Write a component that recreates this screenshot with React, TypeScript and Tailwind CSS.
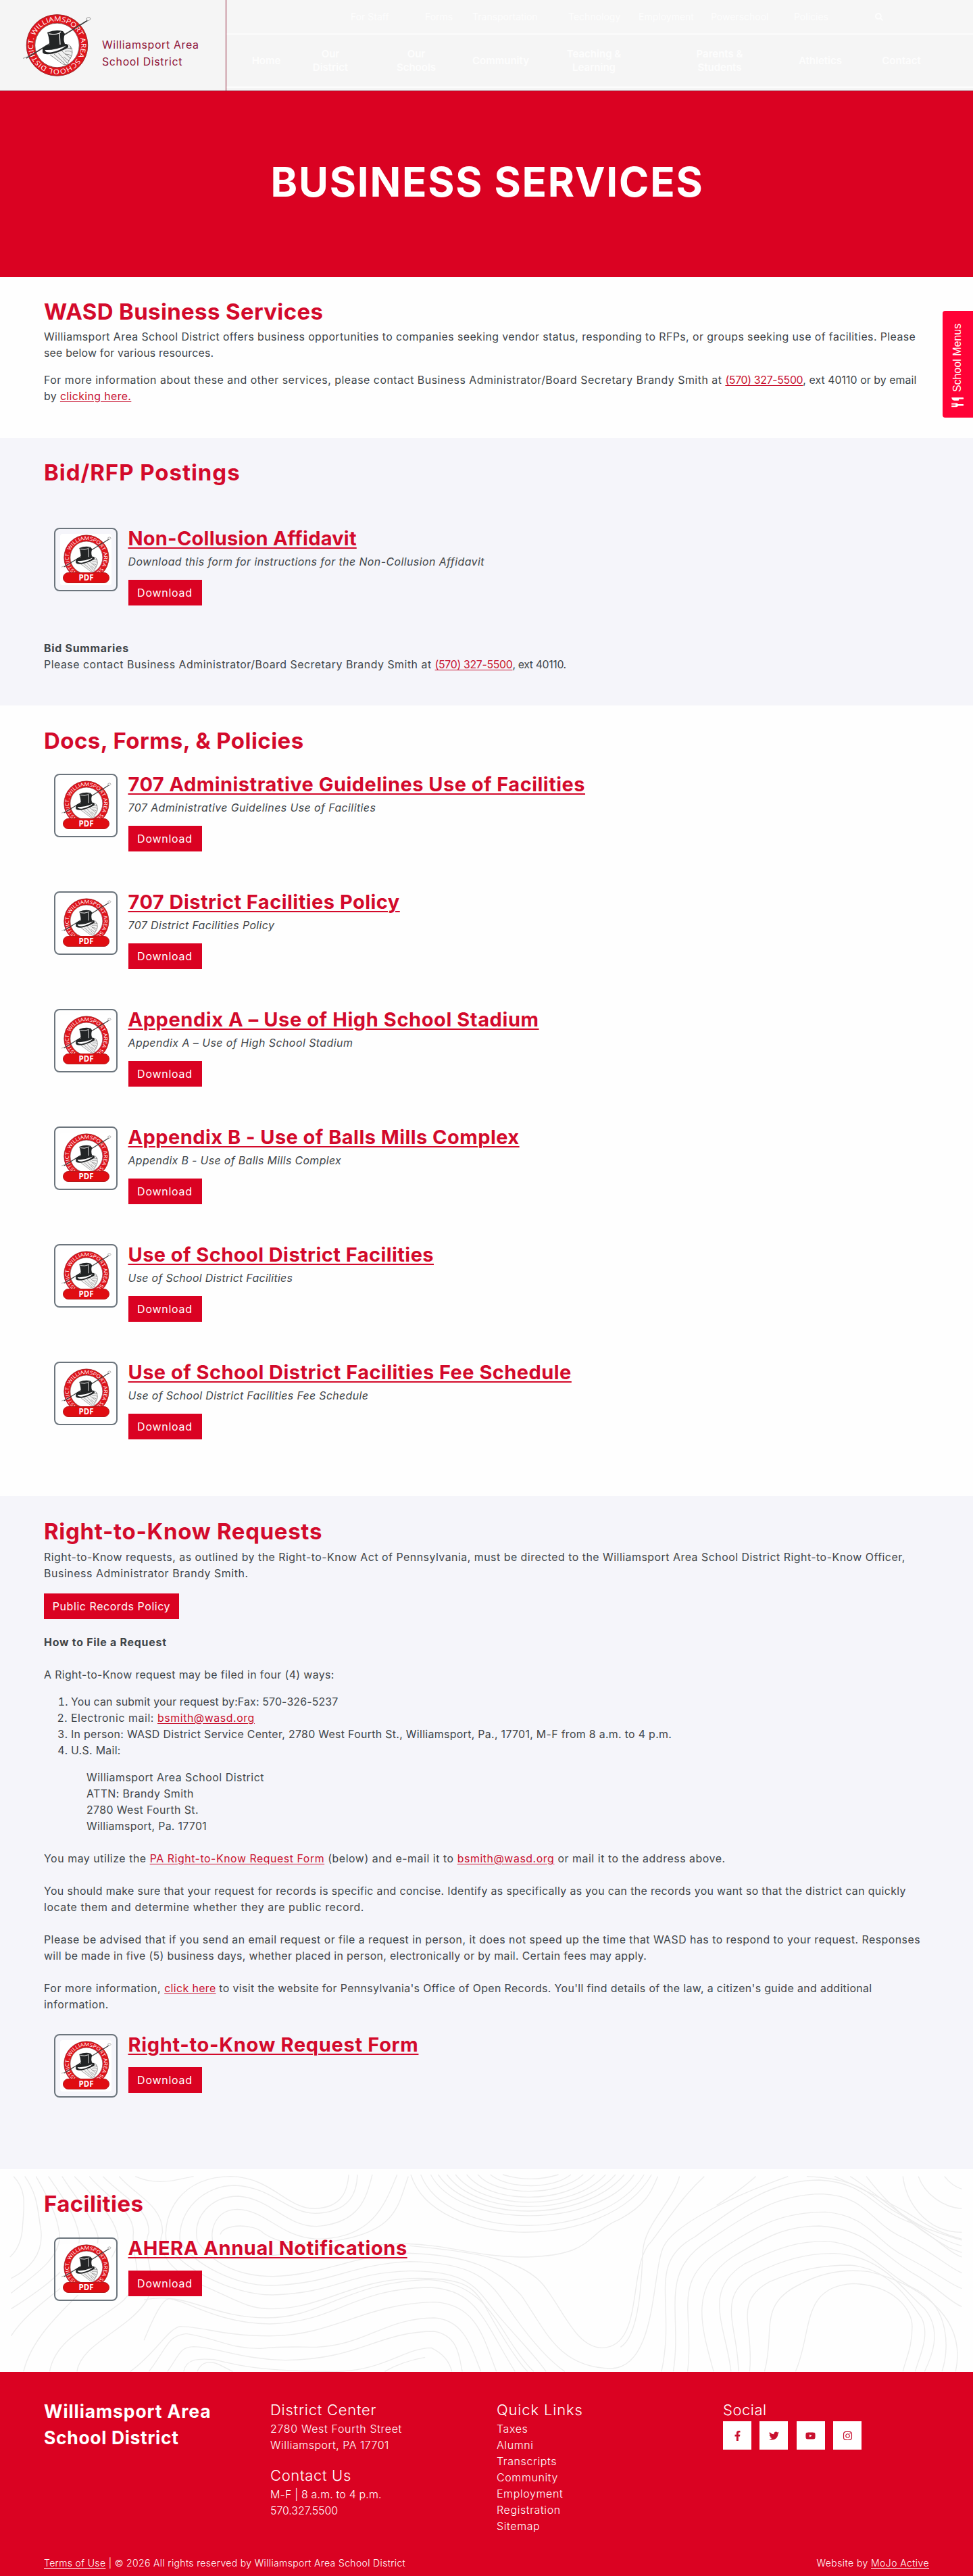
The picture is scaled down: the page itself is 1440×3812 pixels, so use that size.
import type { ReactNode } from 'react';
import { useId } from 'react';
import { FaFacebookF, FaInstagram, FaSearch, FaTwitter, FaYoutube } from 'react-icons/fa';

/* Circular district seal: lettered ring, top hat, cane and gloves. */
function Seal({ className }: { className: string }) {
  const id = useId();
  return (
    <svg viewBox="14 8 104 98" className={className}>
      <circle cx="64.5" cy="57" r="38" fill="#fff" />
      <circle cx="64.5" cy="57" r="39.2" fill="none" stroke="#e0141c" strokeWidth="12.4" />
      <circle cx="64.5" cy="57" r="45.3" fill="none" stroke="#8d2a2c" strokeWidth="0.9" />
      <circle cx="64.5" cy="57" r="32.8" fill="none" stroke="#6b2426" strokeWidth="0.8" />
      <defs>
        <path id={id} d="M28.9 57 A35.6 35.6 0 1 1 100.1 57 A35.6 35.6 0 1 1 28.900 57" transform="rotate(23 64.5 57)" />
      </defs>
      <text fill="#fff" fontSize="10" fontFamily="'Open Sans', 'Noto Sans', sans-serif" fontWeight="400">
        <textPath href={`#${id}`} textLength="220" lengthAdjust="spacingAndGlyphs">
          WILLIAMSPORT AREA SCHOOL DISTRICT.
        </textPath>
      </text>
      <path d="M50 70 L72 63 L84 58 L88 70 L80 85 L74 84 L64 78 Z" fill="#f1f1f1" />
      <path d="M54 71 L73 85 L79 86 M60 70 L76 84 M66 68 L80 84 L84 76 L72 66 M70 64 Q80 60 87 62 M84 58 Q90 66 84 77 M76 66 Q84 64 87 68 M76 70 Q83 70 86 73 M74 74 L82 80 M80 56 Q86 57 84 63" fill="none" stroke="#7f7f7f" strokeWidth="0.9" />
      <path d="M19 76 L110 20" stroke="#3a3a3a" strokeWidth="1.6" />
      <path d="M14 76.5 L22 73.5" stroke="#aaa" strokeWidth="1.2" />
      <path d="M108 17 Q113 14 114 18 Q112 22 108.500 20 Z" fill="#f7f7f7" stroke="#8a8a8a" strokeWidth="0.9" />
      <path d="M43 62 Q47 56 53 57 L76 55 Q82 55 81 60 Q72 66 58 69.500 Q44 72 43 67 Z" fill="#232526" />
      <path d="M46.500 64 Q60 65 78 57.500 Q70 65 55 67.500 Q47 68 46.500 64 Z" fill="#fff" />
      <path d="M50 38 Q62 33 73 36 L76 40 Q73 48 76 55 Q66 61 53 60 Q54 50 50 38 Z" fill="#232526" />
      <path d="M52 40 Q61 42 68 39 L70 37 M68 39 L69 56" fill="none" stroke="#f2f2f2" strokeWidth="1.3" />
    </svg>
  );
}

function PdfIcon() {
  return (
    <div className="relative mt-px size-[94px] shrink-0 rounded-lg border-2 border-[#6c757d] p-[7px]">
      <div className="size-full rounded-sm bg-white" />
      <Seal className="absolute left-[9px] top-[6px] h-[72px] w-[76px]" />
      <div className="absolute left-[11px] top-[64px] flex h-[16px] w-[69px] items-center justify-center rounded-full border border-[#b51a1c] bg-[#e00d12] font-['Open_Sans'] text-[11.5px] font-bold leading-none text-white">
        PDF
      </div>
    </div>
  );
}

function Button({ children, className = 'w-[109px] tracking-[0.75px]' }: { children: ReactNode; className?: string }) {
  return (
    <a className={`flex h-[38px] items-center justify-center whitespace-nowrap bg-[#da0222] text-base text-white ${className}`}>
      {children}
    </a>
  );
}

function Link({ children, className = '' }: { children: ReactNode; className?: string }) {
  return <a className={`text-[#c8102e] underline underline-offset-2 ${className}`}>{children}</a>;
}

function Heading({ children, className }: { children: ReactNode; className: string }) {
  return <h2 className={`h-[38px] whitespace-nowrap text-[33px] font-bold leading-[40px] text-[#d30a2b] ${className}`}>{children}</h2>;
}

function Line({ children, className = '' }: { children: ReactNode; className?: string }) {
  return <span className={`block whitespace-pre ${className}`}>{children}</span>;
}

function Doc({ title, titleClass, note, noteClass = '' }: { title: string; titleClass: string; note?: string; noteClass?: string }) {
  return (
    <div className="flex gap-[15.5px] pl-[15px]">
      <PdfIcon />
      <div className="flex flex-col items-start">
        <h3 className={`h-[34px] whitespace-nowrap text-[29px] font-bold leading-[34px] text-[#d30a2b] underline decoration-2 underline-offset-[3px] ${titleClass}`}>
          {title}
        </h3>
        {note && <p className={`mt-[6px] whitespace-nowrap italic leading-6 ${noteClass}`}>{note}</p>}
        <div className={note ? 'mt-[14px]' : 'mt-4'}>
          <Button>Download</Button>
        </div>
      </div>
    </div>
  );
}

const docs = [
  { title: '707 Administrative Guidelines Use of Facilities', titleClass: 'tracking-[0.47px]', noteClass: 'tracking-[0.42px]' },
  { title: '707 District Facilities Policy', titleClass: 'tracking-[0.47px]', noteClass: 'tracking-[0.39px]' },
  { title: 'Appendix A – Use of High School Stadium', titleClass: 'tracking-[0.58px]', noteClass: 'tracking-[0.46px]' },
  { title: 'Appendix B - Use of Balls Mills Complex', titleClass: 'tracking-[0.45px]', noteClass: 'tracking-[0.35px]' },
  { title: 'Use of School District Facilities', titleClass: 'tracking-[0.43px]', noteClass: 'tracking-[0.31px]' },
  { title: 'Use of School District Facilities Fee Schedule', titleClass: 'tracking-[0.45px]', noteClass: 'tracking-[0.35px]' },
];

/* Contour lines of the topographic backdrop. */
const contours = [
  'M22 92 C45 160 38 230 36 330 C34 380 28 420 16 450',
  'M40 92 C62 180 60 240 66 330 C70 430 50 500 18 545',
  'M58 92 C78 190 92 260 96 350 C98 460 50 540 18 610',
  'M78 92 C100 180 122 260 128 360 C130 470 70 590 18 680',
  'M100 92 C120 180 150 270 158 360 C160 520 60 620 18 800',
  'M120 92 C150 180 185 270 190 360 C195 520 60 700 38 958',
  'M144 92 C170 180 215 240 215 340 C210 480 240 520 200 640 C160 740 90 800 80 958',
  'M166 92 C200 190 240 230 240 340 C225 440 262 560 232 660 C200 780 130 840 124 958',
  'M192 92 C220 180 262 220 262 340 C250 420 275 520 330 580 C380 640 400 680 435 680 C520 680 560 560 660 545 C740 540 760 570 780 660 C800 760 830 900 850 958',
  'M218 92 C240 120 262 118 280 110 L312 92',
  'M268 380 C262 260 290 95 372 92 C440 98 460 235 508 235 C550 230 560 160 562 84',
  'M290 380 C286 240 330 132 378 132 C440 140 462 255 508 256 C566 250 575 160 576 84',
  'M318 380 C310 270 340 180 384 180 C436 190 460 313 510 314 C580 300 590 190 600 84',
  'M345 410 C335 320 350 240 382 238 C430 242 450 360 510 370 C600 370 620 220 640 84',
  'M268 380 C280 480 370 620 440 618 C540 610 560 520 660 512 C760 510 770 600 800 700 C830 800 860 880 880 958',
  'M290 380 C310 480 380 580 440 576 C540 565 560 485 660 470 C770 475 790 560 820 680 C850 800 880 900 910 958',
  'M318 380 C340 470 380 536 440 536 C520 530 560 450 650 432 C760 440 800 500 840 620 C880 780 900 940 985 945 C1060 940 1050 500 1070 400 C1090 300 1180 180 1270 92',
  'M345 410 C360 440 390 460 420 450 C500 420 560 400 650 390 C740 400 760 450 850 450 C960 440 940 350 1000 280 C1040 220 1050 160 1060 92',
  'M355 350 C360 300 410 300 425 345 C450 390 480 400 520 385 C640 350 640 230 658 92',
  'M660 400 C780 430 850 470 880 590 C910 700 930 850 970 853 C1040 850 1010 480 1050 380 C1080 270 1100 180 1135 92',
  'M810 84 Q855 122 900 84',
  'M790 84 C820 150 890 150 920 84',
  'M770 84 C800 180 900 185 940 84',
  'M752 84 C790 215 910 220 958 84',
  'M734 84 C780 245 920 250 976 84',
  'M720 84 C770 272 930 275 992 84',
  'M706 84 C760 300 940 300 1006 84',
  'M694 84 C740 325 960 330 1022 84',
  'M678 84 C720 380 970 390 1038 84',
  'M662 84 C700 420 980 430 1050 84',
  'M232 820 C250 700 262 640 272 635 C300 640 350 745 435 747 C540 740 570 590 690 585 C770 590 780 740 830 958',
  'M232 640 C300 600 340 720 430 720 C520 720 560 560 690 550 C760 560 790 680 812 780 C830 860 845 920 860 958',
  'M210 958 C250 880 270 770 290 758 C330 760 360 802 440 800 C540 795 590 655 700 650 C770 660 780 820 800 958',
  'M240 958 C270 850 270 800 300 790 C350 810 370 858 420 856 C460 845 480 850 510 850 C590 840 620 722 700 720 C750 730 760 860 775 958',
  'M270 958 C290 880 290 850 312 848 C350 850 390 905 460 908 C580 905 610 780 700 780 C740 800 740 900 745 958',
  'M296 958 C300 900 320 900 345 905 C380 930 420 958 540 958 C620 955 650 855 695 853 C715 880 725 920 728 958',
  'M318 958 C325 910 340 910 355 930 L375 958',
  'M620 958 C640 925 665 905 685 895',
  'M1066 958 C1090 650 1040 480 1120 360 C1180 240 1240 108 1320 108 C1400 120 1400 230 1470 300 C1510 370 1530 430 1550 450',
  'M1085 958 C1100 700 1060 520 1140 380 C1200 270 1250 170 1325 170 C1400 180 1400 300 1460 370 C1510 440 1530 500 1550 520',
  'M1108 958 C1120 700 1080 560 1160 420 C1220 310 1260 250 1330 250 C1400 265 1410 380 1460 450 C1510 520 1530 570 1550 590',
  'M1150 958 C1130 760 1110 580 1180 450 C1240 350 1270 312 1320 312 C1400 325 1420 440 1470 520 C1510 580 1530 650 1550 670',
  'M1178 958 C1170 760 1130 600 1200 480 C1260 400 1290 380 1330 380 C1400 390 1420 520 1480 600 C1530 680 1530 860 1518 958',
  'M1190 958 C1190 760 1150 620 1220 520 C1270 450 1310 432 1345 434 C1420 445 1450 580 1490 680 C1520 780 1500 900 1490 958',
  'M1208 958 C1216 760 1180 650 1240 560 C1290 500 1330 486 1370 486 C1430 500 1460 620 1485 720 C1500 800 1480 900 1475 958',
  'M1232 958 C1250 780 1220 660 1290 570 C1330 510 1370 505 1400 515 C1470 560 1560 700 1540 958',
  'M1282 958 C1310 780 1290 580 1375 568 C1440 575 1470 680 1470 760 C1470 850 1460 900 1455 958',
  'M1155 220 C1200 140 1210 110 1218 92',
  'M1095 92 C1085 200 1040 300 1036 420 C1034 560 1030 800 1000 850',
  'M1300 92 C1400 105 1400 190 1450 260 C1490 330 1520 380 1550 400',
  'M1345 92 C1400 160 1420 190 1460 250 C1500 320 1520 350 1550 370',
  'M1370 92 C1410 160 1440 250 1490 320 C1520 350 1530 360 1550 375',
  'M1396 92 C1420 180 1460 300 1530 410 L1550 430',
  'M1455 92 C1460 200 1490 340 1550 340',
  'M1480 92 C1490 170 1520 230 1550 235',
  'M1522 92 C1530 120 1540 140 1550 148',
];

const topNav = [
  ['For Staff', 'w-[110px]'], ['Forms', 'w-[70px]'], ['Transportation', 'w-[142px]'], ['Technology', 'w-[104px]'], ['Employment', 'w-[107px]'], ['Powerschool', 'w-[123px]'], ['Policies', 'w-[120px]'],
] as const;

const mainNav: [string[], string][] = [
  [['Home'], 'w-[58px]'], [['Our', 'District'], 'w-[132px]'], [['Our', 'Schools'], 'w-[122px]'], [['Community'], 'w-[128px]'],
  [['Teaching &', 'Learning'], 'w-[148px]'], [['Parents &', 'Students'], 'w-[224px]'], [['Athletics'], 'w-[74px]'], [['Contact'], 'w-[166px]'],
];

const socials = [FaFacebookF, FaTwitter, FaYoutube, FaInstagram];
const quickLinks = ['Taxes', 'Alumni', 'Transcripts', 'Community', 'Employment', 'Registration', 'Sitemap'];

export default function App() {
  return (
    <div className="relative w-[1440px] bg-[#fefefe] font-['Inter',sans-serif] text-[15.92px] leading-6 text-[#404549]">
      <header className="flex h-[135px] border-b border-[#8f1730] bg-[#f5f5f5]">
        <div className="flex w-[335px] border-r border-[#8f1730]">
          <Seal className="ml-[34px] mt-[18px] h-[98px] w-[104px] shrink-0" />
          <div className="ml-[13px] mt-[54px] leading-[25px] tracking-[0.65px] text-[#8f1338]">
            <Line>Williamsport Area</Line>
            <Line>School District</Line>
          </div>
        </div>
        <div className="flex-1 text-[#fdfdfd]">
          <div className="flex h-[49px] items-center bg-[#f6f6f6] pl-[184px] text-sm">
            {topNav.map(([label, w]) => <span key={label} className={`whitespace-nowrap ${w}`}>{label}</span>)}
            <FaSearch className="size-3" />
          </div>
          <div className="h-[3px] bg-[#fafafa]" />
          <div className="flex h-[76px] items-center">
            {mainNav.map(([lines, w]) => (
              <div key={lines.join()} className={`text-center text-[15px] font-semibold ${w} ${lines[0] === 'Home' ? 'ml-[30px]' : ''}`}>
                {lines.map((l) => <div key={l} className="leading-5">{l}</div>)}
              </div>
            ))}
          </div>
          <div className="h-[2px] bg-[#fcfcfc]" />
        </div>
      </header>

      <div className="flex h-[275px] items-start justify-center bg-[#da0222]">
        <h1 className="mt-[99px] whitespace-nowrap pl-[2px] text-[60px] font-bold leading-[70px] tracking-[1.8px] text-white">BUSINESS SERVICES</h1>
      </div>

      <section className="h-[238px] px-[65px] pt-[31px]">
        <Heading className="tracking-[0.35px]">WASD Business Services</Heading>
        <p className="mt-2">
          <Line className="tracking-[0.41px]">Williamsport Area School District offers business opportunities to companies seeking vendor status, responding to RFPs, or groups seeking use of facilities. Please</Line>
          <Line className="tracking-[0.18px]">see below for various resources.</Line>
        </p>
        <p className="mt-4">
          <Line className="tracking-[0.04px]">
            <span className="tracking-[0.5px]">For more information about these and other services, please contact Business Administrator/Board Secretary Brandy Smith at </span>
            <Link className="tracking-[-0.35px]">(570) 327-5500</Link>, ext 40110 or by email
          </Line>
          <Line className="tracking-[0.36px]">by <Link>clicking here.</Link></Line>
        </p>
      </section>

      <section className="h-[396px] bg-[#f5f5fa] px-[65px] pt-[31px]">
        <Heading className="tracking-[0.95px]">Bid/RFP Postings</Heading>
        <div className="mt-[63px] h-[168px]">
          <Doc title="Non-Collusion Affidavit" titleClass="tracking-[0.22px]" note="Download this form for instructions for the Non-Collusion Affidavit" noteClass="tracking-[0.43px]" />
        </div>
        <p>
          <Line className="font-bold tracking-[0.72px]">Bid Summaries</Line>
          <Line className="tracking-[-0.4px]">
            <span className="tracking-[0.5px]">Please contact Business Administrator/Board Secretary Brandy Smith at </span>
            <Link className="tracking-[-0.35px]">(570) 327-5500</Link>, ext 40110.
          </Line>
        </p>
      </section>

      <section className="h-[1170px] px-[65px] pt-8">
        <Heading className="mb-[30px] tracking-[0.45px]">Docs, Forms, &amp; Policies</Heading>
        {docs.map((d) => (
          <div key={d.title} className="h-[174px]">
            <Doc {...d} note={d.title} />
          </div>
        ))}
      </section>

      <section className="h-[996px] bg-[#f5f5fa] px-[65px] pt-8">
        <Heading className="tracking-[0.68px]">Right-to-Know Requests</Heading>
        <p className="mb-[17px] mt-[9px]">
          <Line className="tracking-[0.49px]">Right-to-Know requests, as outlined by the Right-to-Know Act of Pennsylvania, must be directed to the Williamsport Area School District Right-to-Know Officer,</Line>
          <Line className="tracking-[0.56px]">Business Administrator Brandy Smith.</Line>
        </p>
        <Button className="w-[200px] tracking-[0.55px]">Public Records Policy</Button>
        <p className="mt-[23px] font-bold tracking-[0.75px]">How to File a Request</p>
        <p className="mt-6 tracking-[0.36px]">A Right-to-Know request may be filed in four (4) ways:</p>
        <ol className="mt-4 list-decimal pl-[40px]">
          <li className="tracking-[0.14px]">You can submit your request by:Fax: 570-326-5237</li>
          <li className="tracking-[0.55px]">Electronic mail: <Link>bsmith@wasd.org</Link></li>
          <li className="tracking-[0.31px]">In person: WASD District Service Center, 2780 West Fourth St., Williamsport, Pa., 17701, M-F from 8 a.m. to 4 p.m.</li>
          <li className="tracking-[0.3px]">U.S. Mail:</li>
        </ol>
        <address className="mt-4 pl-[63px] not-italic">
          <Line className="tracking-[0.5px]">Williamsport Area School District</Line>
          <Line className="tracking-[0.39px]">ATTN: Brandy Smith</Line>
          <Line className="tracking-[0.39px]">2780 West Fourth St.</Line>
          <Line className="tracking-[0.29px]">Williamsport, Pa. 17701</Line>
        </address>
        <p className="mt-6 tracking-[0.54px]">
          You may utilize the <Link>PA Right-to-Know Request Form</Link> (below) and e-mail it to <Link>bsmith@wasd.org</Link> or mail it to the address above.
        </p>
        <p className="mt-6">
          <Line className="tracking-[0.35px]">You should make sure that your request for records is specific and concise. Identify as specifically as you can the records you want so that the district can quickly</Line>
          <Line className="tracking-[0.58px]">locate them and determine whether they are public record.</Line>
        </p>
        <p className="mt-6">
          <Line className="tracking-[0.46px]">Please be advised that if you send an email request or file a request in person, it does not speed up the time that WASD has to respond to your request. Responses</Line>
          <Line className="tracking-[0.32px]">will be made in five (5) business days, whether placed in person, electronically or by mail. Certain fees may apply.</Line>
        </p>
        <p className="mb-[30px] mt-6">
          <Line className="tracking-[0.36px]"><span className="tracking-[0.55px]">For more information, </span><Link>click here</Link> to visit the website for Pennsylvania's Office of Open Records. You'll find details of the law, a citizen's guide and additional</Line>
          <Line className="tracking-[0.5px]">information.</Line>
        </p>
        <Doc title="Right-to-Know Request Form" titleClass="tracking-[0.68px]" />
      </section>

      <section className="relative h-[300px] px-[65px] pt-[31px]">
        <svg viewBox="0 60 1568 900" preserveAspectRatio="none" className="absolute inset-0 size-full" fill="none" stroke="#ececec" strokeWidth="1.4">
          {contours.map((c) => <path key={c} d={c} vectorEffect="non-scaling-stroke" />)}
        </svg>
        <div className="relative">
          <Heading className="mb-[31px] tracking-[0.4px]">Facilities</Heading>
          <Doc title="AHERA Annual Notifications" titleClass="tracking-[0.56px]" />
        </div>
      </section>

      <footer className="flex h-[302px] flex-col bg-[#da0222] px-[65px] text-base font-light text-white">
        <div className="grid h-[272px] grid-cols-[335px_335px_335px_1fr] pt-[39px]">
          <div className="text-[26.5px] font-bold leading-[39px]">
            <Line className="tracking-[0.9px]">Williamsport Area</Line>
            <Line className="tracking-[0.65px]">School District</Line>
          </div>
          <div className="pt-1">
            <h4 className="mb-[3px] text-[22px] leading-[26px] tracking-[0.75px]">District Center</h4>
            <Line className="tracking-[0.64px]">2780 West Fourth Street</Line>
            <Line className="tracking-[0.5px]">Williamsport, PA 17701</Line>
            <h4 className="mb-[3px] mt-5 text-[22px] leading-[26px] tracking-[0.65px]">Contact Us</h4>
            <Line className="tracking-[0.15px]">M-F | 8 a.m. to 4 p.m.</Line>
            <Line className="tracking-[-0.1px]">570.327.5500</Line>
          </div>
          <div className="pt-1">
            <h4 className="mb-[3px] text-[22px] leading-[26px] tracking-[0.85px]">Quick Links</h4>
            {quickLinks.map((q) => <Line key={q} className="tracking-[0.6px]">{q}</Line>)}
          </div>
          <div className="pt-1">
            <h4 className="mb-1 text-[22px] leading-[26px] tracking-[0.5px]">Social</h4>
            <div className="flex gap-[12.4px]">
              {socials.map((Icon, i) => (
                <a key={i} className="flex size-[42px] items-center justify-center bg-white text-[#c8102e]">
                  <Icon className="size-[15px]" />
                </a>
              ))}
            </div>
          </div>
        </div>
        <div className="flex justify-between whitespace-nowrap text-sm font-light leading-[21px]">
          <p className="tracking-[0.35px]"><a className="underline underline-offset-2">Terms of Use</a> | © 2026 All rights reserved by Williamsport Area School District</p>
          <p className="tracking-[0.42px]">Website by <a className="underline underline-offset-2">MoJo Active</a></p>
        </div>
      </footer>

      <div className="absolute right-0 top-[460px] flex h-[158px] w-[45px] items-center justify-center rounded-l bg-[#ff0236]">
        <div className="flex -rotate-90 items-center gap-[5px] whitespace-nowrap pr-1 font-['Liberation_Sans'] text-base text-white">
          <svg viewBox="0 0 18 20" className="h-5 w-[18px]" fill="currentColor">
            <path d="M1 1 H2.300 V7 H3.200 V1 H4.600 V7 H5.500 V1 H6.800 V8 Q6.800 10 5.300 11 V18 Q5.300 19 4 19 Q2.700 19 2.700 18 V11 Q1 10 1 8 Z" />
            <path d="M15 1 V18 Q15 19 13.800 19 Q12.500 19 12.500 18 V12 L10.500 11.500 V5 Q11 1.500 15 1 Z" />
          </svg>
          School Menus
        </div>
      </div>
    </div>
  );
}
